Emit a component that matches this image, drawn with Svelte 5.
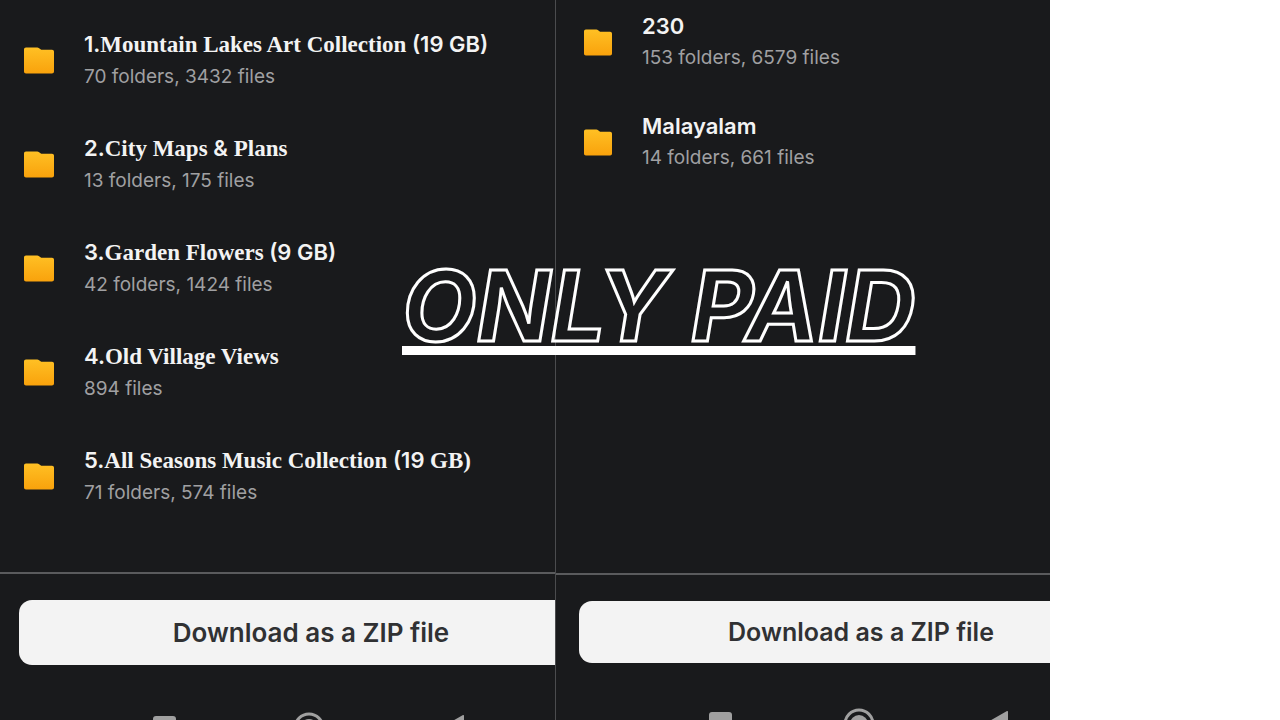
<script lang="ts">
	type Part = { text: string; serif?: boolean };
	type Folder = { name: Part[]; info: string };

	const archive: Folder[] = [
		{
			name: [{ text: "1." }, { text: "Mountain Lakes Art Collection", serif: true }, { text: " (19 GB)" }],
			info: "70 folders, 3432 files"
		},
		{
			name: [{ text: "2." }, { text: "City Maps ", serif: true }, { text: "&" }, { text: " Plans", serif: true }],
			info: "13 folders, 175 files"
		},
		{
			name: [{ text: "3." }, { text: "Garden Flowers", serif: true }, { text: " (9 GB)" }],
			info: "42 folders, 1424 files"
		},
		{
			name: [{ text: "4." }, { text: "Old Village Views", serif: true }],
			info: "894 files"
		},
		{
			name: [
				{ text: "5." },
				{ text: "All Seasons Music Collection", serif: true },
				{ text: " (19 " },
				{ text: "GB)", serif: true }
			],
			info: "71 folders, 574 files"
		}
	];

	const more: Folder[] = [
		{ name: [{ text: "230" }], info: "153 folders, 6579 files" },
		{ name: [{ text: "Malayalam" }], info: "14 folders, 661 files" }
	];

	const panels = [
		{ id: "first", folders: archive },
		{ id: "second", folders: more }
	];
</script>

<main>
	{#each panels as panel}
		<section class="panel {panel.id}">
			<ul>
				{#each panel.folders as folder}
					<li>
						<svg class="folder" viewBox="0 0 30 27" preserveAspectRatio="none" aria-hidden="true">
							<defs>
								<linearGradient id="fill-{panel.id}" x1="0" y1="0" x2="0" y2="1">
									<stop offset="0" stop-color="#ffc024" />
									<stop offset="1" stop-color="#f9a20c" />
								</linearGradient>
							</defs>
							<path
								fill="url(#fill-{panel.id})"
								d="M2 .5h11.2c.8 0 1.3.2 1.9.7l1.4 1.1c.5.4 1 .5 1.6.5H28c1.2 0 2 .8 2 2V24.5c0 1.3-.9 2-2 2H2c-1.2 0-2-.8-2-2v-22c0-1.2.8-2 2-2z"
							/>
						</svg>
						<div>
							<h2>{#each folder.name as part}<span class:serif={part.serif}>{part.text}</span>{/each}</h2>
							<p>{folder.info}</p>
						</div>
					</li>
				{/each}
			</ul>
			<footer>
				<button class="download" type="button">Download as a ZIP file</button>
				<nav>
					<button type="button" aria-label="Recent apps">
						<svg viewBox="0 0 32 32"><rect x="4" y="4" width="23" height="23" rx="3" /></svg>
					</button>
					<button type="button" aria-label="Home">
						<svg viewBox="0 0 32 32">
							<circle class="ring" cx="16" cy="16" r="14" />
							<circle cx="16" cy="16" r="9" />
						</svg>
					</button>
					<button type="button" aria-label="Back">
						<svg viewBox="0 0 32 32"><path d="M26 3q1-.5 1 1v24q0 1.5-1 1L5 17q-1-1 0-2z" /></svg>
					</button>
				</nav>
			</footer>
		</section>
	{/each}
	<h1>ONLY PAID</h1>
</main>

<style>
	:global(body) {
		background: #fff;
	}
	main {
		position: relative;
		display: grid;
		grid-template-columns: 556fr 494fr 230fr;
		height: 100vh;
		overflow: hidden;
		font-family: Inter, "Liberation Sans", sans-serif;
	}
	.panel {
		display: flex;
		flex-direction: column;
		min-width: 0;
		min-height: 0;
		overflow: hidden;
		box-sizing: border-box;
		background: #191a1c;
	}
	.first {
		border-right: 1px solid #4b4c4e;
	}
	ul {
		flex: 1;
		display: flex;
		flex-direction: column;
		gap: 40px;
		margin: 0;
		padding: 28px 0 0 24px;
		list-style: none;
	}
	.second ul {
		gap: 36px;
		padding: 10px 0 0 28px;
	}
	li {
		display: flex;
		align-items: center;
		gap: 30px;
		height: 64px;
	}
	.folder {
		width: 30px;
		height: 27px;
		flex: none;
	}
	.second .folder {
		width: 28px;
	}
	h2,
	p {
		margin: 0;
		line-height: 32px;
		white-space: nowrap;
	}
	h2 {
		color: #f3f3f3;
		font-size: 22px;
		font-weight: 600;
	}
	.serif {
		font-family: "Liberation Serif", serif;
		font-size: 23px;
		font-weight: 700;
	}
	p {
		color: #a0a0a2;
		font-size: 19px;
	}
	footer {
		border-top: 2px solid #5a5b5d;
		padding: 26px 0 0 19px;
		height: 120px;
	}
	.second footer {
		padding-left: 23px;
		height: 119px;
	}
	.download {
		display: block;
		width: 584px;
		height: 65px;
		border: none;
		border-radius: 13px;
		background: #f3f3f3;
		color: #303133;
		font: 600 26px Inter, "Liberation Sans", sans-serif;
	}
	.second .download {
		width: 564px;
		height: 62px;
		font-size: 25px;
	}
	nav {
		display: flex;
		justify-content: space-between;
		width: 320px;
		margin: 47px 0 0 130px;
	}
	.second nav {
		margin: 45px 0 0 126px;
		width: 308px;
	}
	nav button {
		width: 32px;
		height: 32px;
		padding: 0;
		border: none;
		background: none;
	}
	nav svg {
		display: block;
		fill: #a0a0a0;
	}
	nav .ring {
		fill: none;
		stroke: #a0a0a0;
		stroke-width: 3;
	}
	h1 {
		position: absolute;
		top: 241px;
		left: 402px;
		margin: 0;
		color: transparent;
		font: italic 700 97px/130px Inter, sans-serif;
		white-space: nowrap;
		-webkit-text-stroke: 3px #fff;
		text-decoration: underline;
		text-decoration-color: #fff;
		text-decoration-thickness: 9px;
		text-decoration-skip-ink: none;
	}
</style>
